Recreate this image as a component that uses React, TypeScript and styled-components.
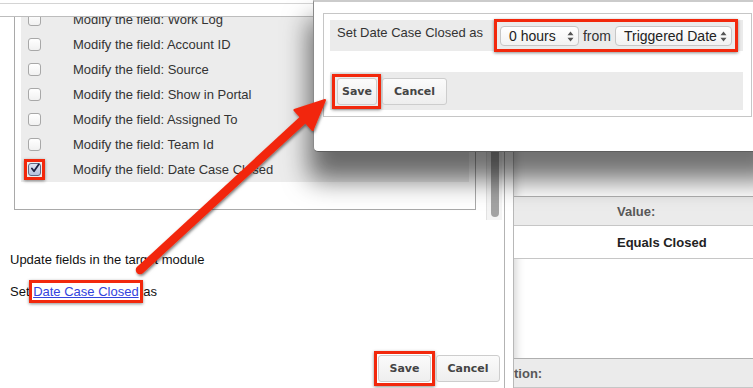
import React from "react"
import styled, { createGlobalStyle } from "styled-components"

const GlobalStyle = createGlobalStyle`
	*, *::before, *::after { box-sizing: border-box; }
	html, body { margin: 0; padding: 0; background: #fff; }
	body { font-family: "Liberation Sans", Arial, sans-serif; }
`

const RED = "#f2280c"

const Screen = styled.div`
	position: relative;
	width: 753px;
	height: 388px;
	overflow: hidden;
	display: flex;
	background: #fff;
`

const Dialog = styled.div`
	width: 505px;
	flex: none;
	display: flex;
	flex-direction: column;
	border-right: 1px solid #b3b3b3;
	background: #fff;
`

const TopBar = styled.div`
	height: 14px;
	margin-top: 3px;
	border-top: 1px solid #d4d4d4;
	border-bottom: 1px solid #bdbdbd;
`

const ListArea = styled.div`
	display: flex;
	height: 203px;
`

const ListBox = styled.div`
	margin-left: 14px;
	width: 462px;
	height: 193px;
	display: flex;
	flex-direction: column;
	border: 1px solid #a9a9a9;
	border-top: none;
	padding: 0 6px;
	overflow: hidden;
`

const Rows = styled.div`
	margin-top: -10px;
	background: #ececec;
`

const Row = styled.div`
	height: 25px;
	display: flex;
	align-items: center;
	gap: 32px;
	padding-left: 7px;
	font-size: 13px;
	color: #333;
`

const Box = styled.span<{ $checked?: boolean }>`
	display: inline-flex;
	align-items: center;
	justify-content: center;
	width: 13px;
	height: 13px;
	flex: none;
	border-radius: 3px;
	border: 1px solid ${p => (p.$checked ? "#5d6a87" : "#a8a8a8")};
	background: ${p => (p.$checked ? "linear-gradient(#dde4f3, #b5c1dc)" : "linear-gradient(#ffffff, #f1f1f1)")};
`

const Highlight = styled.span<{ $pad: string; $margin?: string }>`
	display: inline-flex;
	align-items: center;
	border: 3px solid ${RED};
	box-shadow: 0 1px 3px rgba(0, 0, 0, 0.45);
	padding: ${p => p.$pad};
	margin: ${p => p.$margin || "0"};
`

const InlineMark = styled.span`
	border: 3px solid ${RED};
	box-shadow: 0 1px 3px rgba(0, 0, 0, 0.45);
	padding: 1px 1px;
	margin: 0 -3px 0 -4px;
`

const Scrollbar = styled.div`
	margin-left: 10px;
	width: 16px;
	height: 203px;
	background: #f4f4f4;
	border-left: 1px solid #e2e2e2;
	display: flex;
	flex-direction: column;
	justify-content: flex-end;
	align-items: center;
	padding-bottom: 3px;
`

const Thumb = styled.div`
	width: 8px;
	height: 110px;
	border-radius: 4px;
	background: #a2a2a2;
`

const Para = styled.p<{ $top: number }>`
	margin: ${p => p.$top}px 0 0 10px;
	font-size: 13px;
	line-height: 16px;
	color: #111;
`

const Link = styled.a`
	color: #3344dd;
	text-decoration: underline;
`

const ButtonBar = styled.div`
	margin-top: auto;
	display: flex;
	justify-content: flex-end;
	align-items: center;
	gap: 1px;
	padding: 0 4px 2px 0;
`

const Btn = styled.button<{ $w: number }>`
	width: ${p => p.$w}px;
	height: 27px;
	padding: 0;
	border: 1px solid #cdcdcd;
	border-radius: 3px;
	background: linear-gradient(#fbfbfb, #eeeeee);
	font: bold 11px "DejaVu Sans", Verdana, sans-serif;
	color: #444;
`

const RightPage = styled.div`
	flex: 1;
	margin-left: 8px;
	border-left: 1px solid #b8b8b8;
	overflow: hidden;
	padding-top: 196px;
	box-shadow: inset 10px 0 10px -8px rgba(0, 0, 0, 0.18);
`

const TRow = styled.div<{ $head?: boolean; $top?: number }>`
	display: grid;
	grid-template-columns: 103px 1fr;
	align-items: center;
	height: ${p => (p.$head ? 30 : 33)}px;
	margin-top: ${p => p.$top || 0}px;
	background: ${p => (p.$head ? "#ebebeb" : "#fff")};
	border-top: ${p => (p.$head ? "1px solid #afafaf" : "none")};
	border-bottom: 1px solid #c6c6c6;
	font-size: 13px;
	font-weight: bold;
	color: ${p => (p.$head ? "#585858" : "#222")};
`

const Cell = styled.div`
	white-space: nowrap;
`

const Popup = styled.div`
	position: absolute;
	left: 313px;
	top: 0;
	width: 460px;
	height: 152px;
	background: #fff;
	border-top: 2px solid #cbcbcb;
	border-left: 1px solid #8a8a8a;
	border-bottom: 1px solid #5e5e5e;
	border-bottom-left-radius: 5px;
	padding: 11px 0 0 9px;
	box-shadow: 0 24px 26px 4px rgba(0, 0, 0, 0.56);
	z-index: 5;
`

const PopupBox = styled.div`
	width: 429px;
	border: 1px solid #c6c6c6;
	padding: 6px 8px 6px 6px;
`

const SetRow = styled.div`
	height: 31px;
	display: flex;
	align-items: flex-start;
	padding: 5px 0 0 7px;
	background: #ebebeb;
	font-size: 13px;
	line-height: 16px;
	color: #333;
`

const Select = styled.div<{ $w: number }>`
	width: ${p => p.$w}px;
	height: 20px;
	display: flex;
	align-items: center;
	justify-content: space-between;
	padding: 0 4px 0 8px;
	border: 1px solid #c6c6c6;
	border-radius: 4px;
	background: linear-gradient(#ffffff, #f2f2f2);
	font-size: 14px;
	color: #222;
	white-space: nowrap;
`

const From = styled.span`
	margin: 0 4px;
	font-size: 14px;
	line-height: 20px;
	color: #333;
`

const ActionRow = styled.div`
	margin-top: 21px;
	height: 38px;
	display: flex;
	align-items: center;
	gap: 1px;
	padding-left: 2px;
	background: #ebebeb;
`

const Overlay = styled.svg`
	position: absolute;
	left: 0;
	top: 0;
	z-index: 10;
	pointer-events: none;
`

const fields = ["Work Log", "Account ID", "Source", "Show in Portal", "Assigned To", "Team Id", "Date Case Closed"]

const Arrows = () => (
	<svg width="7" height="11" viewBox="0 0 7 11">
		<path d="M3.5 0.5 L6.5 4.3 L0.5 4.3 Z M3.5 10.5 L6.5 6.7 L0.5 6.7 Z" fill="#555" />
	</svg>
)

const Check = () => (
	<svg width="13" height="13" viewBox="0 0 13 13" style={{ marginTop: -3, marginLeft: 1 }}>
		<path d="M2.5 6.5 L5.2 10 L11.5 1" fill="none" stroke="#1a2140" strokeWidth="2.3" strokeLinecap="round" strokeLinejoin="round" />
	</svg>
)

export default function App() {
	return (
		<Screen>
			<GlobalStyle />
			<Dialog>
				<TopBar />
				<ListArea>
					<ListBox>
						<Rows>
							{fields.map((f, i) => {
								const last = i === fields.length - 1
								return (
									<Row key={f}>
										{last ? (
											<Highlight $pad="1px" $margin="-4px">
												<Box $checked><Check /></Box>
											</Highlight>
										) : (
											<Box />
										)}
										<span>Modify the field: {f}</span>
									</Row>
								)
							})}
						</Rows>
					</ListBox>
					<Scrollbar>
						<Thumb />
					</Scrollbar>
				</ListArea>
				<Para $top={32}>Update fields in the target module</Para>
				<Para $top={16}>
					Set <InlineMark><Link href="#">Date Case Closed</Link></InlineMark> as
				</Para>
				<ButtonBar>
					<Highlight $pad="1px">
						<Btn $w={53}>Save</Btn>
					</Highlight>
					<Btn $w={64}>Cancel</Btn>
				</ButtonBar>
			</Dialog>

			<RightPage>
				<TRow $head>
					<Cell />
					<Cell>Value:</Cell>
				</TRow>
				<TRow>
					<Cell />
					<Cell>Equals Closed</Cell>
				</TRow>
				<TRow $head $top={99}>
					<Cell>tion:</Cell>
					<Cell />
				</TRow>
			</RightPage>

			<Popup>
				<PopupBox>
					<SetRow>
						<span>Set Date Case Closed as</span>
						<Highlight $pad="4px 3px 3px" $margin="-6px 0 0 11px">
							<Select $w={79}>
								<span>0 hours</span>
								<Arrows />
							</Select>
							<From>from</From>
							<Select $w={117}>
								<span>Triggered Date</span>
								<Arrows />
							</Select>
						</Highlight>
					</SetRow>
					<ActionRow>
						<Highlight $pad="1px 1px 1px 2px">
							<Btn $w={40}>Save</Btn>
						</Highlight>
						<Btn $w={65}>Cancel</Btn>
					</ActionRow>
				</PopupBox>
			</Popup>

			<Overlay width="753" height="388" viewBox="0 0 753 388">
				<defs>
					<filter id="arrowShadow" x="-20%" y="-20%" width="140%" height="140%">
						<feDropShadow dx="1" dy="1.5" stdDeviation="1.5" floodColor="#000" floodOpacity="0.55" />
					</filter>
				</defs>
				<g filter="url(#arrowShadow)">
					<line x1="140" y1="270" x2="306" y2="117" stroke={RED} strokeWidth="8.5" strokeLinecap="round" />
					<polygon points="325,100 312.6,130 294.4,110" fill={RED} stroke={RED} strokeWidth="2" strokeLinejoin="round" />
				</g>
			</Overlay>
		</Screen>
	)
}
